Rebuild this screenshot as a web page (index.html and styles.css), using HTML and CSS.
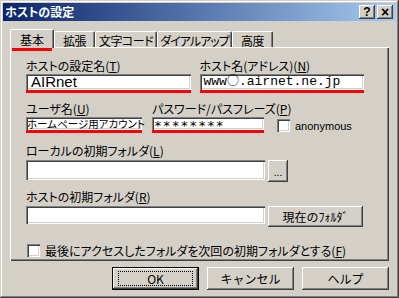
FILE: index.html
```html
<!DOCTYPE html>
<html lang="ja">
<head>
    <meta charset="UTF-8" />
    <title>ホストの設定</title>
    <link rel="stylesheet" href="styles.css">
</head>
<body>

<div class="window">

    <div class="titlebar">
        <span class="title">ホストの設定</span>
        <span class="tbtn">?</span>
        <span class="tbtn close">×</span>
    </div>

    <div class="body">

        <div class="tabs">
            <div class="tab active"><span class="mark-tab">基本</span></div>
            <div class="tab w41">拡張</div>
            <div class="tab w62">文字コード</div>
            <div class="tab w75">ダイアルアップ</div>
            <div class="tab w41">高度</div>
        </div>

        <div class="panel">

            <div class="row r1">
                <div class="field f164">
                    <label>ホストの設定名(<u>T</u>)</label>
                    <div class="mark"><div class="edit big">AIRnet</div></div>
                </div>
                <div class="field f164">
                    <label>ホスト名(アドレス)(<u>N</u>)</label>
                    <div class="mark"><div class="edit mono">www<span class="circ">○</span>.airnet.ne.jp</div></div>
                </div>
            </div>

            <div class="row r2">
                <div class="field f115">
                    <label>ユーザ名(<u>U</u>)</label>
                    <div class="mark"><div class="edit small">ホームページ用アカウント</div></div>
                </div>
                <div class="field f111">
                    <label>パスワード/パスフレーズ(<u>P</u>)</label>
                    <div class="mark"><div class="edit small pw">********</div></div>
                </div>
                <label class="check anon"><span class="box"></span>anonymous</label>
            </div>

            <div class="field r3">
                <label>ローカルの初期フォルダ(<u>L</u>)</label>
                <div class="line">
                    <div class="edit path tall"></div>
                    <button type="button" class="btn dots">...</button>
                </div>
            </div>

            <div class="field r4">
                <label>ホストの初期フォルダ(<u>R</u>)</label>
                <div class="line">
                    <div class="edit path"></div>
                    <button type="button" class="btn cur">現在のﾌｫﾙﾀﾞ</button>
                </div>
            </div>

            <label class="check last"><span class="box"></span>最後にアクセスしたフォルダを次回の初期フォルダとする(<u>F</u>)</label>

        </div>

        <div class="actions">
            <button type="button" class="btn act default"><span class="focus">OK</span></button>
            <button type="button" class="btn act">キャンセル</button>
            <button type="button" class="btn act">ヘルプ</button>
        </div>

    </div>
</div>

</body>
</html>
```

FILE: styles.css
```css
body {
    margin: 0;
    background: #d4d0c8;
    font-family: "Noto Sans CJK JP", "Liberation Sans", sans-serif;
    font-size: 12px;
    font-feature-settings: "palt";
    color: #000;
}
.window {
    width: 399px;
    height: 298px;
    box-sizing: border-box;
    padding: 3px;
    background: #d4d0c8;
    box-shadow: inset -1px -1px #404040, inset 1px 1px #d4d0c8,
                inset -2px -2px #808080, inset 2px 2px #fff;
}
.titlebar {
    height: 18px;
    display: flex;
    align-items: center;
    padding: 0 3px 0 2px;
    background: linear-gradient(to right, #0a246a, #a6caf0);
}
.title {
    flex: 1;
    color: #fff;
    font-weight: bold;
    font-size: 12px;
    line-height: 14px;
}
.tbtn {
    width: 16px;
    height: 14px;
    margin-left: 2px;
    background: #d4d0c8;
    box-shadow: inset -1px -1px #404040, inset 1px 1px #fff, inset -2px -2px #808080;
    font-family: "Liberation Sans", sans-serif;
    font-weight: bold;
    font-size: 12px;
    line-height: 14px;
    text-align: center;
}
.tbtn.close {
    font-size: 14px;
}
.body {
    padding: 8px 7px 0 7px;
}
.tabs {
    display: flex;
    align-items: flex-end;
    height: 18px;
    position: relative;
    z-index: 1;
}
.tab {
    height: 16px;
    box-sizing: border-box;
    padding-top: 2px;
    text-align: center;
    line-height: 13px;
    white-space: nowrap;
    letter-spacing: -0.5px;
    border-left: 1px solid #fff;
    border-top: 1px solid #fff;
    border-right: 1px solid #404040;
    box-shadow: inset -1px 0 #808080;
    border-radius: 2px 2px 0 0;
    background: #d4d0c8;
}
.tab.active {
    width: 44px;
    height: 19px;
    margin-bottom: -1px;
    padding-top: 3px;
    letter-spacing: 0;
}
.mark-tab {
    display: inline-block;
    width: 40px;
    padding-bottom: 2px;
    border-bottom: 3px solid #f00;
}
.w41 { width: 41px; }
.w62 { width: 62px; }
.w75 { width: 75px; letter-spacing: -1px; }
.panel {
    height: 214px;
    box-sizing: border-box;
    padding: 12px 16px 0 16px;
    box-shadow: inset 1px 1px #fff, inset -1px -1px #404040, inset -2px -2px #808080;
}
.row {
    display: flex;
    align-items: flex-end;
}
.field label {
    display: block;
    line-height: 14px;
    height: 14px;
    white-space: nowrap;
}
u {
    text-decoration-thickness: 1px;
    text-underline-offset: 1px;
}
.f164 { width: 164px; margin-right: 10px; }
.f115 { width: 115px; margin-right: 11px; }
.f111 { width: 111px; margin-right: 14px; }
.mark {
    border-bottom: 3px solid #f00;
    margin: 1px -1px 0 0;
}
.edit {
    box-sizing: border-box;
    padding: 0 3px;
    background: #fff;
    white-space: nowrap;
    box-shadow: inset 1px 1px #808080, inset 2px 2px #404040, inset -1px -1px #fff, inset -2px -2px #d4d0c8;
}
.big {
    height: 16px;
    line-height: 16px;
    font-family: "Liberation Sans", sans-serif;
    font-size: 15px;
    padding-left: 5px;
}
.mono {
    height: 16px;
    line-height: 16px;
    font-family: "Liberation Mono", monospace;
    font-size: 13px;
    padding-left: 4px;
}
.circ {
    font-family: "Noto Sans CJK JP", sans-serif;
    font-size: 12px;
    line-height: 12px;
}
.small {
    height: 13px;
    line-height: 13px;
    font-size: 10.5px;
    padding: 0 1px;
}
.pw {
    font-family: "DejaVu Sans Mono", monospace;
    font-size: 13px;
    line-height: 17px;
    letter-spacing: 1px;
    padding-left: 2px;
}
.r1 { margin-top: 0; }
.r2 { margin-top: 9px; }
.r3 { margin-top: 11px; }
.r4 { margin-top: 8px; }
.line {
    display: flex;
    align-items: flex-start;
    margin-top: 2px;
}
.path {
    width: 239px;
    height: 20px;
    margin-right: 3px;
}
.r4 .path {
    height: 18px;
}
.check {
    display: flex;
    align-items: center;
    white-space: nowrap;
}
.box {
    width: 13px;
    height: 13px;
    box-sizing: border-box;
    background: #fff;
    margin-right: 5px;
    box-shadow: inset 1px 1px #808080, inset 2px 2px #404040, inset -1px -1px #fff, inset -2px -2px #d4d0c8;
}
.anon {
    font-family: "Liberation Sans", sans-serif;
    font-size: 11px;
    margin-bottom: 1px;
}
.last {
    margin-top: 15px;
    padding-left: 1px;
}
.btn {
    margin: 0;
    padding: 0;
    border: 0;
    background: #d4d0c8;
    font-family: inherit;
    font-size: 12px;
    color: #000;
    box-shadow: inset -1px -1px #404040, inset 1px 1px #fff, inset -2px -2px #808080;
}
.dots {
    width: 20px;
    height: 22px;
    font-size: 10px;
}
.cur {
    width: 95px;
    height: 21px;
    font-feature-settings: normal;
}
.actions {
    display: flex;
    justify-content: flex-end;
    margin-top: 6px;
    gap: 8px;
}
.act {
    width: 87px;
    height: 23px;
}
.default {
    box-shadow: inset 0 0 0 1px #000, inset -2px -2px #404040, inset 2px 2px #fff, inset -3px -3px #808080;
}
.focus {
    display: inline-block;
    width: 73px;
    line-height: 13px;
    outline: 1px dotted #000;
}
```
